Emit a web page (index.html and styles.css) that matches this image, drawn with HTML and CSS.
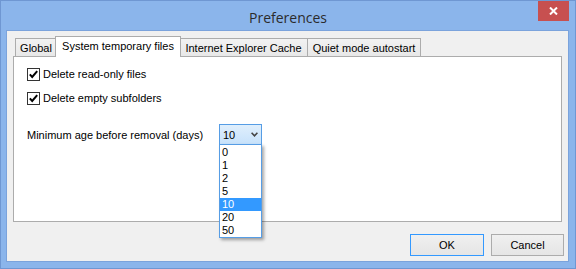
FILE: index.html
```html
<!DOCTYPE html>
<html lang="en">
<head>
    <meta charset="UTF-8" />
    <title>Preferences</title>
    <link rel="stylesheet" href="styles.css">
</head>
<body>
    <div class="window">
        <div class="titlebar">
            <span></span>
            <span class="title">Preferences</span>
            <button class="close" type="button">
                <svg width="9" height="8" viewBox="0 0 9 8">
                    <path d="M1 0.5 L8 7.5 M8 0.5 L1 7.5" stroke="#fff" stroke-width="2" fill="none" />
                </svg>
            </button>
        </div>
        <div class="client">
            <div class="tabs">
                <div class="tab tab-global">Global</div>
                <div class="tab tab-active tab-system">System temporary files</div>
                <div class="tab tab-ie">Internet Explorer Cache</div>
                <div class="tab tab-quiet">Quiet mode autostart</div>
            </div>
            <div class="panel">
                <label class="check">
                    <svg class="box" width="13" height="13" viewBox="0 0 13 13">
                        <rect x="0.5" y="0.5" width="12" height="12" fill="#fff" stroke="#333" />
                        <path d="M2.8 6.4 L5.2 9 L10.2 3.2" stroke="#000" stroke-width="2" fill="none" />
                    </svg>
                    Delete read-only files
                </label>
                <label class="check">
                    <svg class="box" width="13" height="13" viewBox="0 0 13 13">
                        <rect x="0.5" y="0.5" width="12" height="12" fill="#fff" stroke="#333" />
                        <path d="M2.8 6.4 L5.2 9 L10.2 3.2" stroke="#000" stroke-width="2" fill="none" />
                    </svg>
                    Delete empty subfolders
                </label>
                <div class="age-row">
                    <span class="age-label">Minimum age before removal (days)</span>
                    <div class="combo">
                        <div class="combo-field">
                            <span>10</span>
                            <svg width="7" height="5" viewBox="0 0 7 5">
                                <path d="M0.6 0.8 L3.5 3.8 L6.4 0.8" stroke="#444" stroke-width="1.6" fill="none" />
                            </svg>
                        </div>
                        <ul class="combo-list">
                            <li>0</li>
                            <li>1</li>
                            <li>2</li>
                            <li>5</li>
                            <li class="selected">10</li>
                            <li>20</li>
                            <li>50</li>
                        </ul>
                    </div>
                </div>
            </div>
            <div class="buttons">
                <button class="btn btn-default" type="button">OK</button>
                <button class="btn btn-cancel" type="button">Cancel</button>
            </div>
        </div>
    </div>
</body>
</html>
```

FILE: styles.css
```css
body {
    margin: 0;
    padding: 0;
    background-color: white;
}
.window {
    width: 576px;
    height: 269px;
    box-sizing: border-box;
    border: 1px solid #6f97d2;
    background-color: #8bb5eb;
    font-family: "Liberation Sans", Arial, sans-serif;
    font-size: 11px;
    color: black;
    overflow: hidden;
}
.titlebar {
    height: 30px;
    display: grid;
    grid-template-columns: 1fr auto 1fr;
}
.title {
    align-self: center;
    padding-top: 2px;
    font-family: "Open Sans", sans-serif;
    font-size: 14px;
    color: #2b2b2b;
}
.close {
    justify-self: end;
    align-self: start;
    width: 31px;
    height: 20px;
    margin-right: 6px;
    padding: 0;
    border: none;
    background-color: #c75050;
    display: flex;
    align-items: center;
    justify-content: center;
}
.client {
    width: 561px;
    height: 230px;
    margin-left: 6px;
    box-sizing: border-box;
    padding-top: 5px;
    background-color: #f0f0f0;
    outline: 1px solid #7ba3dc;
}
.tabs {
    display: flex;
    align-items: flex-end;
    height: 21px;
    padding-left: 8px;
    margin-bottom: -1px;
    position: relative;
    z-index: 1;
}
.tab {
    box-sizing: border-box;
    height: 18px;
    margin-bottom: 1px;
    border: 1px solid #acacac;
    border-bottom: none;
    background: linear-gradient(#f2f2f2, #e8e8e8);
    display: flex;
    align-items: center;
    justify-content: center;
    white-space: nowrap;
}
.tab-global {
    width: 42px;
}
.tab-active {
    height: 21px;
    margin: 0 -2px;
    background: white;
    position: relative;
    z-index: 2;
    padding-bottom: 2px;
}
.tab-system {
    width: 126px;
}
.tab-ie {
    width: 129px;
}
.tab-quiet {
    width: 114px;
    margin-left: -1px;
}
.panel {
    width: 549px;
    height: 166px;
    margin-left: 6px;
    box-sizing: border-box;
    border: 1px solid #acacac;
    background-color: white;
    padding: 5px 0 0 13px;
}
.check {
    display: flex;
    align-items: center;
    height: 24px;
}
.box {
    margin-right: 3px;
}
.age-row {
    display: flex;
    align-items: center;
    margin-top: 14px;
}
.age-label {
    width: 192px;
}
.combo {
    position: relative;
    width: 43px;
    height: 21px;
}
.combo-field {
    box-sizing: border-box;
    height: 21px;
    border: 1px solid #569de5;
    background: linear-gradient(#e0effc, #c7e2fb);
    display: flex;
    align-items: center;
    justify-content: space-between;
    padding: 0 3px 0 3px;
}
.combo-list {
    position: absolute;
    top: 20px;
    left: 0;
    width: 43px;
    box-sizing: border-box;
    margin: 0;
    padding: 1px 0 0 0;
    list-style: none;
    border: 1px solid #569de5;
    background-color: white;
    box-shadow: 2px 2px 3px rgba(0, 0, 0, 0.35);
}
.combo-list li {
    height: 13px;
    line-height: 13px;
    padding-left: 2px;
}
.combo-list li.selected {
    background-color: #3399ff;
    color: white;
}
.buttons {
    display: flex;
    justify-content: flex-end;
    gap: 7px;
    margin-top: 12px;
    padding-right: 4px;
}
.btn {
    width: 74px;
    height: 22px;
    box-sizing: border-box;
    border: 1px solid #acacac;
    background: linear-gradient(#f0f0f0, #e5e5e5);
    font-family: "Liberation Sans", Arial, sans-serif;
    font-size: 11px;
    color: black;
    padding: 0;
}
.btn-default {
    border-color: #3399ff;
}
.btn-cancel {
    width: 73px;
}
```
